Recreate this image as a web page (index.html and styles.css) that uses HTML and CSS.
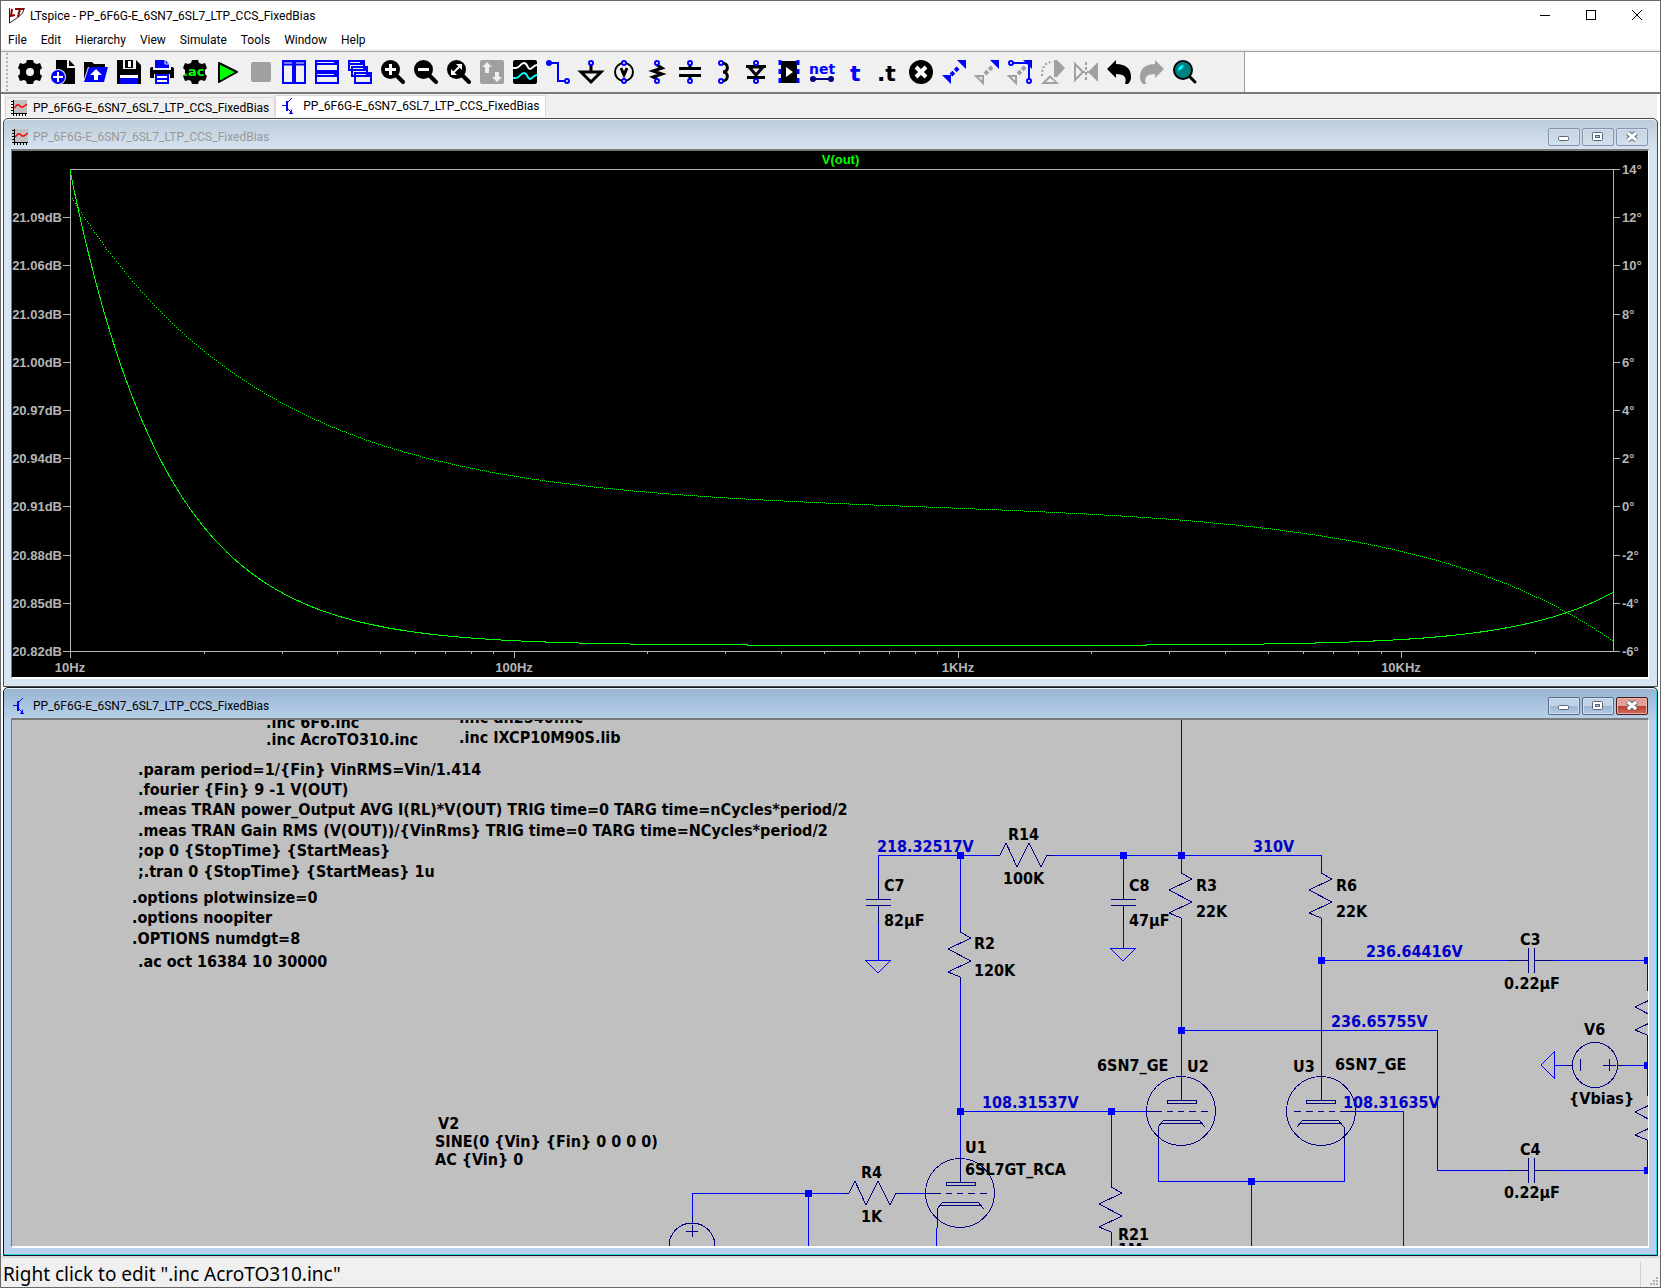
FILE: index.html
```html
<!DOCTYPE html>
<html lang="en">
<head>
    <meta charset="UTF-8">
    <meta name="viewport" content="width=device-width, initial-scale=1.0">
    <title>LTspice - PP_6F6G-E_6SN7_6SL7_LTP_CCS_FixedBias</title>
    <link rel="stylesheet" href="styles.css">
</head>
<body>

    <!-- shared drawings -->
    <svg class="defs" width="0" height="0">
        <defs>
            <symbol id="chart-icon" viewBox="0 0 16 16">
                <rect x="2" y="0" width="14" height="13" fill="#c0c0c0"/>
                <path d="M2.5 0v16M0 13.5h16M0 1.5h2M0 4.5h2M0 7.5h2M0 10.5h2M5.5 13v3M8.5 13v3M11.5 13v3M14.5 13v3" stroke="#000" fill="none"/>
                <path d="M3 8l3-3h2l2 2h2l4-3" stroke="#f00" stroke-width="1.5" fill="none"/>
            </symbol>
            <symbol id="transistor-icon" viewBox="0 0 16 16">
                <path d="M1 7.5h5M11 0L6 5M6 10l6 6" stroke="#00f" fill="none"/>
                <path d="M5 3h2v10H5zM11 11v5H8z" fill="#00f"/>
            </symbol>
            <symbol id="lens" viewBox="0 0 24 24">
                <path d="M15 15l7 7" stroke="#000" stroke-width="4" stroke-linecap="round"/>
                <circle cx="9.5" cy="9.5" r="9.5"/>
            </symbol>
            <symbol id="gear" viewBox="0 0 24 24">
                <path d="M9 0h6l1 3 3 1 3-1 2 5-2 2v4l2 2-2 5-4-1-2 1-1 3H9l-1-3-2-1-4 1-2-5 2-2v-4L0 8l2-5 3 1 3-1z"/>
            </symbol>
            <symbol id="min-glyph" viewBox="0 0 30 16"><rect x="9.5" y="7.5" width="10" height="4" rx="1" fill="#fff" stroke="#5a6474"/></symbol>
            <symbol id="max-glyph" viewBox="0 0 30 16"><rect x="9.5" y="3.5" width="10" height="8" rx="1" fill="#fff" stroke="#5a6474"/><rect x="12.5" y="6.5" width="4" height="2" fill="#b9c9dc" stroke="#5a6474"/></symbol>
            <symbol id="close-glyph" viewBox="0 0 30 16"><path d="M11 4l8 7M19 4l-8 7" stroke="#5a6474" stroke-width="5"/><path d="M11 4l8 7M19 4l-8 7" stroke="#fff" stroke-width="3"/></symbol>

            <!-- schematic parts, origin on the pin axis -->
            <path id="res" d="M0 -6V0L11 6L-12 17L11 29L-12 40L0 45V51"/>
            <path id="res-h" d="M-6 0H0L6 -12L17 12L29 -12L41 12L47 0H53"/>
            <path id="cap" d="M0 -20V0M-12 0H13M-12 6H13M0 6V26"/>
            <path id="cap-h" d="M-20 0H0M0 -12V13M6 -12V13M6 0H26"/>
            <path id="gnd" d="M-13 0H13L0 13Z"/>
            <g id="tube">
                <circle r="34.5"/>
                <path d="M0 -35V-11M-14 -11H15V-8H-14ZM-35 0H-19M-14 0H-8M-3 0H3M8 0H15M20 0H27M-23 35V16L-17 9H18L24 16M-20 12H20"/>
            </g>
            <rect id="dot" x="-3" y="-3" width="7" height="7"/>
        </defs>
    </svg>

    <header class="titlebar">
        <svg class="app-logo" width="18" height="18" viewBox="0 0 18 18">
            <path d="M1.5 1v15l9-6 4-4 2-5" fill="none" stroke="#222"/>
            <path d="M4 2L3 9l4-1M7 2h9M12 2l-2 8" fill="none" stroke="#8b0000" stroke-width="2"/>
        </svg>
        <h1>LTspice - PP_6F6G-E_6SN7_6SL7_LTP_CCS_FixedBias</h1>
        <div class="window-controls">
            <button aria-label="Minimize"><svg width="12" height="12"><path d="M1 6.5h10" stroke="#000"/></svg></button>
            <button aria-label="Maximize"><svg width="12" height="12"><rect x="1.5" y="1.5" width="9" height="9" fill="none" stroke="#000"/></svg></button>
            <button aria-label="Close"><svg width="12" height="12"><path d="M1 1l10 10M11 1L1 11" stroke="#000"/></svg></button>
        </div>
    </header>

    <nav class="menubar">
        <button>File</button>
        <button>Edit</button>
        <button>Hierarchy</button>
        <button>View</button>
        <button>Simulate</button>
        <button>Tools</button>
        <button>Window</button>
        <button>Help</button>
    </nav>

    <div class="toolbar-row">
        <div class="toolbar">
            <button aria-label="Settings"><svg viewBox="0 0 24 24"><use href="#gear"/><circle cx="12" cy="12" r="4" fill="#f0f0f0"/></svg></button>
            <button aria-label="New schematic"><svg viewBox="0 0 24 24"><path d="M5 0h11v8h8v16H5z"/><path d="M18 0l6 6h-6z"/><circle cx="7" cy="17" r="8" fill="#f0f0f0"/><circle cx="7" cy="17" r="7" fill="#00f"/><path d="M7 12v10M2 17h10" stroke="#fff" stroke-width="2"/></svg></button>
            <button aria-label="Open"><svg viewBox="0 0 24 24"><path d="M0 4V2h8l2 2h11v3H4L0 19z"/><path d="M5 7h19l-4 15H0z" fill="#00f"/><path d="M12 9l6 6h-4v5h-4v-5H6z" fill="#fff"/></svg></button>
            <button aria-label="Save"><svg viewBox="0 0 24 24"><path d="M0 0h6v9h13V0l5 5v19H0zM8 0h8v8H8z"/><path d="M11 1h3v6h-3z" fill="#fff"/><path d="M3 15h18v9H3z" fill="#fff"/><path d="M3 18h18v6H3z" fill="#00f"/></svg></button>
            <button aria-label="Print"><svg viewBox="0 0 24 24"><path d="M5 0h10l4 4v4H5z" fill="#00f"/><path d="M15 0v4h4" stroke="#f0f0f0" fill="none"/><path d="M0 9q0-2 2-2h1v3h18V7h1q2 0 2 2v9h-4v-4H4v4H0z"/><path d="M5 14h14v10H5z" fill="#00f"/><path d="M7 17h10M7 21h10" stroke="#fff" stroke-width="2"/></svg></button>
            <button aria-label="Configure analysis"><svg viewBox="0 0 24 24"><use href="#gear"/><text class="ac-text" x="0" y="16">.ac</text></svg></button>
            <button aria-label="Run"><svg viewBox="0 0 24 24"><path d="M3 3l18 9-18 10z" fill="#0f0" stroke="#000" stroke-width="2" stroke-linejoin="round"/></svg></button>
            <button aria-label="Stop"><svg viewBox="0 0 24 24"><rect x="2" y="2" width="20" height="20" rx="2" fill="#a0a0a0"/></svg></button>
            <button aria-label="Tile vertically"><svg viewBox="0 0 24 24"><path d="M1 1h10v22H1zM13 1h10v22H13z" fill="#f0f0f0" stroke="#00f" stroke-width="2"/><path d="M1 3h22" stroke="#00f" stroke-width="5"/><path d="M2 3h8M14 3h8" stroke="#f0f0f0"/></svg></button>
            <button aria-label="Tile horizontally"><svg viewBox="0 0 24 24"><path d="M1 1h22v10H1zM1 13h22v10H1z" fill="#f0f0f0" stroke="#00f" stroke-width="2"/><path d="M1 3h22M1 15h22" stroke="#00f" stroke-width="4"/><path d="M2 2.5h17M2 14.5h17" stroke="#f0f0f0"/></svg></button>
            <button aria-label="Cascade"><svg viewBox="0 0 24 24"><path d="M1 1h15v9H1zM4 7h15v9H4zM7 13h16v10H7z" fill="#f0f0f0" stroke="#00f" stroke-width="2"/><path d="M1 3h15M4 9h15M7 15h16" stroke="#00f" stroke-width="4"/><path d="M2 2.5h10M5 8.5h10M8 14.5h10" stroke="#f0f0f0"/></svg></button>
            <button aria-label="Zoom in"><svg viewBox="0 0 24 24"><use href="#lens"/><path d="M9.5 4v11M4 9.5h11" stroke="#fff" stroke-width="3"/></svg></button>
            <button aria-label="Zoom out"><svg viewBox="0 0 24 24"><use href="#lens"/><path d="M4 9.5h11" stroke="#fff" stroke-width="3"/></svg></button>
            <button aria-label="Zoom to fit"><svg viewBox="0 0 24 24"><use href="#lens"/><path d="M9 4h6v6zM4 9v6h6z" fill="#fff"/><path d="M6 13l7-7" stroke="#fff" stroke-width="2"/></svg></button>
            <button aria-label="Autorange" disabled><svg viewBox="0 0 24 24"><rect width="24" height="24" rx="2" fill="#a0a0a0"/><path d="M7 2l5 5H9v6H5V7H2zM17 22l5-5h-3v-5h-4v5h-3z" fill="#f0f0f0"/></svg></button>
            <button aria-label="Waveforms"><svg viewBox="0 0 24 24"><rect width="24" height="24" rx="2"/><path d="M0 8h3c4 0 4-5 8-5s3 6 6 6 3-4 7-4" stroke="#fff" stroke-width="2" fill="none"/><path d="M0 18h3c4 0 4-5 8-5s3 6 6 6 3-4 7-4" stroke="#0ff" stroke-width="2" fill="none"/></svg></button>
            <button aria-label="Wire"><svg viewBox="0 0 24 24"><path d="M3 3h9v18h8" stroke="#00f" stroke-width="2" fill="none"/><circle cx="3" cy="3" r="3" fill="#00f"/><circle cx="21" cy="21" r="2" fill="#fff" stroke="#00f" stroke-width="2"/></svg></button>
            <button aria-label="Ground"><svg viewBox="0 0 24 24"><path d="M12 5v7M2 12h20L12 22z" stroke="#000" stroke-width="3" fill="none"/><circle class="pin" cx="12" cy="3" r="2"/></svg></button>
            <button aria-label="Voltage source"><svg viewBox="0 0 24 24"><circle cx="12" cy="12" r="9" fill="none" stroke="#000" stroke-width="2"/><path d="M9 8l3 7 3-7" stroke="#000" stroke-width="3" fill="none"/><circle class="pin" cx="12" cy="3" r="2"/><circle class="pin" cx="12" cy="21" r="2"/></svg></button>
            <button aria-label="Resistor"><svg viewBox="0 0 24 24"><path d="M12 5l5 3-9 3 9 3-9 3 4 2" stroke="#000" stroke-width="3" fill="none"/><circle class="pin" cx="12" cy="3" r="2"/><circle class="pin" cx="12" cy="21" r="2"/></svg></button>
            <button aria-label="Capacitor"><svg viewBox="0 0 24 24"><path d="M1 8.5h22M1 15.5h22M12 5v3M12 16v3" stroke="#000" stroke-width="3"/><circle class="pin" cx="12" cy="3" r="2"/><circle class="pin" cx="12" cy="21" r="2"/></svg></button>
            <button aria-label="Inductor"><svg viewBox="0 0 24 24"><path d="M11 3c7 0 7 9 1 9 6 0 6 9-1 9" stroke="#000" stroke-width="3" fill="none"/><circle class="pin" cx="10" cy="3" r="2"/><circle class="pin" cx="10" cy="21" r="2"/></svg></button>
            <button aria-label="Diode"><svg viewBox="0 0 24 24"><path d="M5 7h14l-7 8zM3 17.5h18M2 6.5h20" stroke="#000" stroke-width="3" fill="none"/><circle class="pin" cx="12" cy="3" r="2"/><circle class="pin" cx="12" cy="21" r="2"/></svg></button>
            <button aria-label="Component"><svg viewBox="0 0 24 24"><rect x="4" y="1" width="16" height="22"/><path d="M3 0v24M21 0v24" stroke="#00f" stroke-width="3" stroke-dasharray="5 4"/><path d="M9 7l7 5-7 5z" fill="#fff"/></svg></button>
            <button aria-label="Net name"><svg viewBox="0 0 24 24"><text class="tool-text blue" x="-1" y="14">net</text><path d="M3 19h18" stroke="#000080" stroke-width="2"/><circle cx="3" cy="19" r="3" fill="#000080"/><circle cx="21" cy="19" r="3" fill="#000080"/></svg></button>
            <button aria-label="Text"><svg viewBox="0 0 24 24"><text class="tool-text big blue" x="7" y="21">t</text></svg></button>
            <button aria-label="SPICE directive"><svg viewBox="0 0 24 24"><text class="tool-text big" x="1" y="21">.t</text></svg></button>
            <button aria-label="Delete"><svg viewBox="0 0 24 24"><circle cx="12" cy="12" r="12"/><path d="M7 7l10 10M17 7L7 17" stroke="#fff" stroke-width="4"/></svg></button>
            <button aria-label="Drag"><svg viewBox="0 0 24 24"><path d="M15 0h9v9zM0 15h9v9z" fill="#00f"/><path d="M9 15L17 7" stroke="#00f" stroke-width="4" stroke-dasharray="4 2"/></svg></button>
            <button aria-label="Move"><svg viewBox="0 0 24 24"><path d="M15 0h9v9z" fill="#00f"/><path d="M1 16h7v7z" fill="none" stroke="#a0a0a0" stroke-width="2"/><path d="M10 14L18 6" stroke="#a0a0a0" stroke-width="4" stroke-dasharray="4 2"/></svg></button>
            <button aria-label="Stretch"><svg viewBox="0 0 24 24"><path d="M1 16h7v7z" fill="none" stroke="#a0a0a0" stroke-width="2"/><path d="M10 14L18 6" stroke="#a0a0a0" stroke-width="4" stroke-dasharray="4 2"/><path d="M4 3h17v16" fill="none" stroke="#00f" stroke-width="2"/><path d="M15 0h9v9z" fill="#00f"/><circle class="pin" cx="3" cy="3" r="2"/><circle class="pin" cx="21" cy="21" r="2"/></svg></button>
            <button aria-label="Rotate" disabled><svg viewBox="0 0 24 24"><path d="M13 0h3l8 8-8 9h-3zM0 24l9-9 9 9z" fill="#a0a0a0"/><path d="M5 22l4-4 5 4z" fill="#f0f0f0"/><path d="M1 16C1 7 4 2 12 2" fill="none" stroke="#a0a0a0" stroke-width="2" stroke-dasharray="2 2"/></svg></button>
            <button aria-label="Mirror" disabled><svg viewBox="0 0 24 24"><path d="M1 4v16l8-8z" fill="none" stroke="#a0a0a0" stroke-width="2"/><path d="M24 2v20L14 12z" fill="#a0a0a0"/><path d="M12 2v20M8 12h8" stroke="#a0a0a0" stroke-width="2" stroke-dasharray="3 2"/></svg></button>
            <button aria-label="Undo"><svg viewBox="0 0 24 24"><path d="M0 9l9-9v4c10 0 15 5 15 13 0 3-1 5-3 7h-3c2-6 0-10-9-10v4z"/></svg></button>
            <button aria-label="Redo" disabled><svg viewBox="0 0 24 24"><path d="M24 9l-9-9v4C5 4 0 9 0 17c0 3 1 5 3 7h3c-2-6 0-10 9-10v4z" fill="#a0a0a0"/></svg></button>
            <button aria-label="Find"><svg viewBox="0 0 24 24"><path d="M16 16l6 6" stroke="#000" stroke-width="3" stroke-linecap="round"/><circle cx="10" cy="10" r="9" fill="#008080" stroke="#000" stroke-width="2"/><path d="M5 11q0-6 6-6l-2 4z" fill="#0ff"/></svg></button>
        </div>
    </div>

    <div class="tabs">
        <button class="tab"><svg width="16" height="16"><use href="#chart-icon"/></svg>PP_6F6G-E_6SN7_6SL7_LTP_CCS_FixedBias</button>
        <button class="tab active"><svg width="16" height="16"><use href="#transistor-icon"/></svg>PP_6F6G-E_6SN7_6SL7_LTP_CCS_FixedBias</button>
    </div>

    <main class="mdi">
        <section class="child">
            <div class="child-title">
                <svg width="16" height="16"><use href="#chart-icon"/></svg>
                <h2>PP_6F6G-E_6SN7_6SL7_LTP_CCS_FixedBias</h2>
                <div class="child-controls">
                    <button aria-label="Minimize"><svg><use href="#min-glyph"/></svg></button>
                    <button aria-label="Maximize"><svg><use href="#max-glyph"/></svg></button>
                    <button aria-label="Close"><svg><use href="#close-glyph"/></svg></button>
                </div>
            </div>
            <div class="client plot">
                <svg id="plot"></svg>
            </div>
        </section>

        <section class="child active">
            <div class="child-title">
                <svg width="16" height="16"><use href="#transistor-icon"/></svg>
                <h2>PP_6F6G-E_6SN7_6SL7_LTP_CCS_FixedBias</h2>
                <div class="child-controls">
                    <button aria-label="Minimize"><svg><use href="#min-glyph"/></svg></button>
                    <button aria-label="Maximize"><svg><use href="#max-glyph"/></svg></button>
                    <button class="close" aria-label="Close"><svg><use href="#close-glyph"/></svg></button>
                </div>
            </div>
            <div class="client sheet">
                <svg>
                    <!-- scroll position of the sheet -->
                    <g transform="translate(-12 -720)">
                        <g class="wires">
                            <path d="M1181 700V867M1181 924V1076"/>
                            <path d="M878 879V855H994M1053 855H1321V867"/>
                            <path d="M878 925V960M1123 855V879M1123 925V948"/>
                            <path d="M960 855V926M960 983V1158"/>
                            <path d="M960 1111H1146M1111 1111V1181M1111 1238V1260"/>
                            <path d="M1321 924V1076M1321 960H1508M1554 960H1660"/>
                            <path d="M1181 1030H1437V1170H1508M1554 1170H1660"/>
                            <path d="M1158 1146V1181H1344V1146M1251 1181V1260"/>
                            <path d="M1356 1111H1403V1260"/>
                            <path d="M692 1216V1193H843M902 1193H925M808 1193V1260M936 1228V1260"/>
                            <path d="M1554 1065H1566M1624 1065H1660M1647 960V984M1647 1041V1089M1647 1146V1170"/>
                            <use href="#gnd" x="878" y="960"/>
                            <use href="#gnd" x="1123" y="948"/>
                            <use href="#gnd" transform="translate(1554 1065) rotate(90)"/>
                        </g>
                        <g class="parts">
                            <use href="#res-h" x="1000" y="855"/>
                            <use href="#res-h" x="849" y="1193"/>
                            <use href="#res" x="960" y="932"/>
                            <use href="#res" x="1181" y="873"/>
                            <use href="#res" x="1321" y="873"/>
                            <use href="#res" x="1111" y="1187"/>
                            <use href="#res" x="1647" y="990"/>
                            <use href="#res" x="1647" y="1095"/>
                            <use href="#cap" x="878" y="899"/>
                            <use href="#cap" x="1123" y="899"/>
                            <use href="#cap-h" x="1528" y="960"/>
                            <use href="#cap-h" x="1528" y="1170"/>
                            <use href="#tube" x="960" y="1193"/>
                            <use href="#tube" x="1181" y="1111"/>
                            <use href="#tube" transform="translate(1321 1111) scale(-1 1)"/>
                            <circle cx="1595" cy="1065" r="22.5"/>
                            <path d="M1566 1065H1572M1617 1065H1624M1580 1059V1071M1603 1065H1616M1609 1059V1071"/>
                            <circle cx="692" cy="1246" r="23"/>
                            <path d="M692 1216V1223M686 1231H698M692 1225V1237"/>
                        </g>
                        <g class="dots">
                            <use href="#dot" x="960" y="855"/>
                            <use href="#dot" x="1123" y="855"/>
                            <use href="#dot" x="1181" y="855"/>
                            <use href="#dot" x="1181" y="1030"/>
                            <use href="#dot" x="1321" y="960"/>
                            <use href="#dot" x="960" y="1111"/>
                            <use href="#dot" x="1111" y="1111"/>
                            <use href="#dot" x="808" y="1193"/>
                            <use href="#dot" x="1251" y="1181"/>
                            <use href="#dot" x="1647" y="960"/>
                            <use href="#dot" x="1647" y="1065"/>
                            <use href="#dot" x="1647" y="1170"/>
                        </g>
                        <g class="labels">
                            <text x="266" y="728">.inc 6F6.inc</text>
                            <text x="266" y="745">.inc AcroTO310.inc</text>
                            <text x="459" y="723">.inc dn2540.inc</text>
                            <text x="459" y="743">.inc IXCP10M90S.lib</text>
                            <text x="138" y="775">.param period=1/{Fin} VinRMS=Vin/1.414</text>
                            <text x="138" y="795">.fourier {Fin} 9 -1 V(OUT)</text>
                            <text x="138" y="815">.meas TRAN power_Output AVG I(RL)*V(OUT) TRIG time=0 TARG time=nCycles*period/2</text>
                            <text x="138" y="836">.meas TRAN Gain RMS (V(OUT))/{VinRms} TRIG time=0 TARG time=NCycles*period/2</text>
                            <text x="138" y="856">;op 0 {StopTime} {StartMeas}</text>
                            <text x="138" y="877">;.tran 0 {StopTime} {StartMeas} 1u</text>
                            <text x="132" y="903">.options plotwinsize=0</text>
                            <text x="132" y="923">.options noopiter</text>
                            <text x="132" y="944">.OPTIONS numdgt=8</text>
                            <text x="138" y="967">.ac oct 16384 10 30000</text>
                            <text x="438" y="1129">V2</text>
                            <text x="435" y="1147">SINE(0 {Vin} {Fin} 0 0 0 0)</text>
                            <text x="435" y="1165">AC {Vin} 0</text>
                            <text x="1008" y="840">R14</text>
                            <text x="1003" y="884">100K</text>
                            <text x="884" y="891">C7</text>
                            <text x="884" y="926">82µF</text>
                            <text x="1129" y="891">C8</text>
                            <text x="1129" y="926">47µF</text>
                            <text x="1196" y="891">R3</text>
                            <text x="1196" y="917">22K</text>
                            <text x="1336" y="891">R6</text>
                            <text x="1336" y="917">22K</text>
                            <text x="974" y="949">R2</text>
                            <text x="974" y="976">120K</text>
                            <text x="1520" y="945">C3</text>
                            <text x="1504" y="989">0.22µF</text>
                            <text x="1584" y="1035">V6</text>
                            <text x="1569" y="1104">{Vbias}</text>
                            <text x="1520" y="1155">C4</text>
                            <text x="1504" y="1198">0.22µF</text>
                            <text x="1097" y="1071">6SN7_GE</text>
                            <text x="1187" y="1072">U2</text>
                            <text x="1293" y="1072">U3</text>
                            <text x="1335" y="1070">6SN7_GE</text>
                            <text x="965" y="1153">U1</text>
                            <text x="965" y="1175">6SL7GT_RCA</text>
                            <text x="861" y="1178">R4</text>
                            <text x="861" y="1222">1K</text>
                            <text x="1118" y="1240">R21</text>
                            <text x="1118" y="1255">1M</text>
                        </g>
                        <g class="voltages">
                            <text x="877" y="852">218.32517V</text>
                            <text x="1253" y="852">310V</text>
                            <text x="1366" y="957">236.64416V</text>
                            <text x="1331" y="1027">236.65755V</text>
                            <text x="982" y="1108">108.31537V</text>
                            <text x="1343" y="1108">108.31635V</text>
                        </g>
                    </g>
                </svg>
            </div>
        </section>
    </main>

    <footer class="statusbar">
        <span>Right click to edit ".inc AcroTO310.inc"</span>
        <div class="grip">
            <svg width="9" height="9"><path d="M6 0h2v2H6zM3 3h2v2H3zM6 3h2v2H6zM0 6h2v2H0zM3 6h2v2H3zM6 6h2v2H6z" fill="#b4b4b4"/></svg>
        </div>
    </footer>

    <script>
        const F_START = 10;
        const F_STOP = 30000;
        const DECADES = Math.log10(F_STOP / F_START);

        // response of V(out): gain in dB, phase in degrees
        const gain = f => 20.8235 + 0.2956 * Math.pow(F_START / f, 2) + 0.033 * Math.pow(f / F_STOP, 2);
        const phase = f => 12.9 * F_START / f - 5.6 * f / F_STOP;

        const margin = { top: 18, right: 35, bottom: 26, left: 58 };
        const svg = document.getElementById('plot');

        function add(name, attrs, text) {
            const el = document.createElementNS('http://www.w3.org/2000/svg', name);
            for (const key in attrs) el.setAttribute(key, attrs[key]);
            if (text) el.textContent = text;
            svg.appendChild(el);
        }

        function draw() {
            svg.innerHTML = '';
            const w = svg.clientWidth - margin.left - margin.right;
            const h = svg.clientHeight - margin.top - margin.bottom;
            const right = margin.left + w, bottom = margin.top + h;

            add('rect', { class: 'axis', x: margin.left, y: margin.top, width: w, height: h });

            for (let i = 0; i <= 10; i++) {
                const y = Math.round(margin.top + h * i / 10);
                add('path', { class: 'axis', d: `M${right} ${y}h7` });
                add('text', { x: right + 9, y: y + 5 }, (14 - 2 * i) + '°');
                if (i > 0) {
                    add('path', { class: 'axis', d: `M${margin.left} ${y}h-7` });
                    add('text', { x: margin.left - 8, y: y + 5, 'text-anchor': 'end' }, (21.12 - 0.03 * i).toFixed(2) + 'dB');
                }
            }

            for (let step = F_START; step < F_STOP; step *= 10) {
                for (let k = 1; k < 10 && k * step < F_STOP; k++) {
                    const f = k * step;
                    const x = Math.round(margin.left + w * Math.log10(f / F_START) / DECADES);
                    add('path', { class: 'axis', d: `M${x} ${bottom}v${k === 1 ? 7 : 3}` });
                    if (k === 1) {
                        add('text', { x: x, y: bottom + 21, 'text-anchor': 'middle' }, f >= 1000 ? f / 1000 + 'KHz' : f + 'Hz');
                    }
                }
            }

            add('text', { class: 'trace-name', x: margin.left + w / 2 - 1, y: 13, 'text-anchor': 'middle' }, 'V(out)');

            // gain is a solid line, phase is one dot every two pixels
            let solid = '', dots = '', lastX = -9, lastY = -9;
            for (let x = 0; x <= w; x += 0.5) {
                const f = F_START * Math.pow(10, DECADES * x / w);
                const px = margin.left + x;
                const gy = margin.top + (21.12 - gain(f)) / 0.3 * h;
                const py = margin.top + (14 - phase(f)) / 20 * h;
                solid += (x ? 'L' : 'M') + px + ' ' + gy.toFixed(1);
                if (Math.max(Math.abs(px - lastX), Math.abs(py - lastY)) >= 2) {
                    dots += `M${Math.round(px)} ${Math.round(py)}h1`;
                    lastX = px;
                    lastY = py;
                }
            }
            add('path', { class: 'trace', d: solid });
            add('path', { class: 'trace', d: dots });
        }

        draw();
        window.addEventListener('resize', draw);
    </script>
</body>
</html>
```
FILE: styles.css
```css
* {
    box-sizing: border-box;
}
body {
    display: flex;
    flex-direction: column;
    height: 100vh;
    margin: 0;
    border: 1px solid #696969;
    background-color: #ffffff;
    color: #000000;
    font-family: Roboto, "Open Sans", sans-serif;
    font-size: 12px;
    overflow: hidden;
}
button {
    padding: 0;
    border: none;
    background: none;
    color: inherit;
    font: inherit;
}
h1, h2 {
    margin: 0;
    font-size: 12px;
    font-weight: normal;
}
.defs {
    position: absolute;
}

/* title bar and menu */
.titlebar {
    display: flex;
    align-items: center;
    height: 30px;
    padding-left: 7px;
}
.app-logo {
    margin-right: 4px;
}
.window-controls {
    display: flex;
    margin-left: auto;
}
.window-controls button {
    width: 46px;
    height: 28px;
}
.menubar {
    display: flex;
    gap: 14px;
    height: 20px;
    padding-left: 7px;
    border-bottom: 2px solid #f0f0f0;
}

/* toolbar */
.toolbar-row {
    height: 43px;
    border-top: 1px solid #a0a0a0;
    border-bottom: 2px solid #7a7a7a;
}
.toolbar {
    display: flex;
    align-items: center;
    gap: 9px;
    width: 1244px;
    height: 100%;
    padding-left: 17px;
    border-right: 1px solid #a0a0a0;
    background: radial-gradient(circle, #b0b0b0 1px, transparent 1px) 4px 0 / 4px 4px repeat-y #f0f0f0;
}
.toolbar button {
    flex: none;
    width: 24px;
    height: 24px;
}
.toolbar svg {
    display: block;
    width: 24px;
    height: 24px;
    overflow: visible;
}
.pin {
    fill: #ffffff;
    stroke: #0000ff;
    stroke-width: 2px;
}
.tool-text {
    font-family: "DejaVu Sans", sans-serif;
    font-size: 14px;
    font-weight: bold;
}
.tool-text.big {
    font-size: 22px;
}
.ac-text {
    fill: #00ff00;
    font-family: "DejaVu Sans", sans-serif;
    font-size: 13px;
    font-weight: bold;
}
.blue {
    fill: #0000ff;
}

/* document tabs */
.tabs {
    display: flex;
    align-items: flex-end;
    height: 24px;
    margin: 0 3px;
    padding: 0 0 1px 1px;
    background-color: #f0f0f0;
}
.tab {
    display: flex;
    align-items: center;
    gap: 6px;
    height: 20px;
    padding: 0 5px;
    border: 1px solid #d9d9d9;
    border-bottom: none;
}
.tab.active {
    height: 22px;
    padding-bottom: 2px;
    background-color: #ffffff;
}

/* child windows */
.mdi {
    display: flex;
    flex: 1;
    flex-direction: column;
    min-height: 0;
    margin: 0 2px;
}
.child {
    display: flex;
    flex: 1;
    flex-direction: column;
    min-height: 0;
    padding: 0 8px 7px 7px;
    border: 1px solid #4a4a4a;
    border-radius: 5px 5px 0 0;
    background: linear-gradient(#bdccda, #d7e4f2 32px);
    box-shadow: inset 0 1px 0 #f4f8fc;
}
.child.active {
    border-color: #101820;
    background: linear-gradient(#98b4d2, #b9d1ea 32px);
    box-shadow: inset 0 1px 0 #e8f2fc, inset -1px -1px 0 #2fd0e8;
}
.child-title {
    display: flex;
    flex: none;
    align-items: center;
    height: 30px;
    padding-left: 1px;
    padding-top: 6px;
}
.child-title h2 {
    margin-left: 5px;
    color: #999999;
}
.child.active h2 {
    color: #000000;
}
.child-controls {
    display: flex;
    gap: 2px;
    margin-left: auto;
    padding-right: 1px;
}
.child-controls button {
    width: 32px;
    height: 18px;
    border: 1px solid #8593ad;
    border-radius: 2px;
    box-shadow: inset 0 0 0 1px #d3dfec;
}
.child-controls svg {
    display: block;
    width: 30px;
    height: 16px;
}
.child.active .child-controls button {
    border-color: #5a6b85;
    background: linear-gradient(#c0d3e8 50%, #9bb5d2 50%, #b5cce6);
}
.child.active .child-controls .close {
    border-color: #4a1c20;
    background: linear-gradient(#e0a095 50%, #b83a28 50%, #d0705a);
    box-shadow: inset 0 0 0 1px #e8b0a6;
}
.client {
    flex: 1;
    min-height: 0;
    border: 1px solid #ffffff;
    border-top: 2px solid #7a7a7a;
    border-left-color: #7a7a7a;
    border-bottom-width: 2px;
}
.client svg {
    display: block;
    width: 100%;
    height: 100%;
}

/* waveform pane */
.plot {
    background-color: #000000;
    font-family: "Liberation Sans", Arial, sans-serif;
    font-size: 13px;
    font-weight: bold;
}
.plot text {
    fill: #b4b4b4;
}
.plot .trace-name {
    fill: #00ff00;
}
.axis {
    fill: none;
    stroke: #b4b4b4;
    shape-rendering: crispEdges;
}
.trace {
    fill: none;
    stroke: #00ff00;
    shape-rendering: crispEdges;
}

/* schematic pane */
.sheet {
    background-color: #c0c0c0;
    font-family: "DejaVu Sans Condensed", "DejaVu Sans", sans-serif;
    font-size: 16px;
    font-weight: bold;
}
.wires {
    fill: none;
    stroke: #0000ff;
    shape-rendering: crispEdges;
}
.parts {
    fill: none;
    stroke: #000080;
    shape-rendering: crispEdges;
}
.dots {
    fill: #0000ff;
}
.voltages {
    fill: #0000c8;
}

/* status bar */
.statusbar {
    display: flex;
    align-items: center;
    justify-content: space-between;
    height: 31px;
    padding: 2px 0 0 2px;
    border-top: 2px solid #d9d9d9;
    background-color: #f0f0f0;
    font-family: "Noto Sans", "Open Sans", sans-serif;
    font-size: 19px;
}
.grip {
    display: flex;
    align-items: flex-end;
    justify-content: flex-end;
    width: 20px;
    height: 26px;
    padding: 0 1px 1px 0;
    border-left: 1px solid #d0d0d0;
}
```
